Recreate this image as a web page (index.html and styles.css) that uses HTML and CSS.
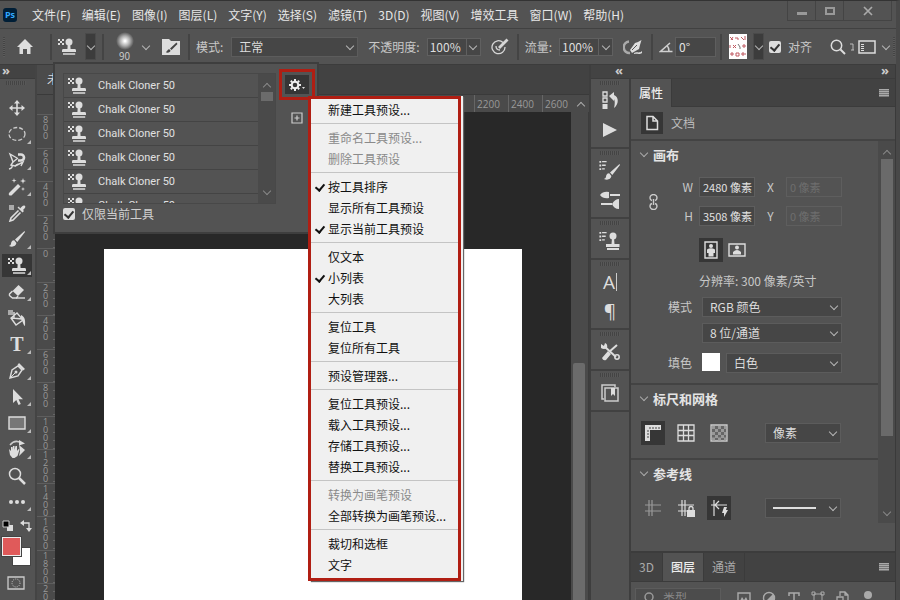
FILE: index.html
```html
<!DOCTYPE html>
<html lang="zh-CN">
<head>
  <meta charset="UTF-8" />
  <title>Photoshop</title>
  <meta name="viewport" content="width=device-width, initial-scale=1.0" />
  <link rel="stylesheet" href="styles.css">
</head>
<body>
  <!-- shared icons -->
  <svg class="sprite" aria-hidden="true">
    <symbol id="stamp" viewBox="0 0 20 18">
      <path d="M1 1h2v2H1zM5 1h2v2H5zM3 3h2v2H3zM1 5h2v2H1zM5 5h2v2H5z"/>
      <circle cx="12" cy="4" r="3.500"/>
      <path d="M10.800 6h2.400l.4 5h4q1.400 0 1.400 1.400V14H5v-1.600Q5 11 6.400 11h4zM6 15.200h12.200v1.600H6z"/>
    </symbol>
    <symbol id="brush" viewBox="0 0 18 18">
      <path d="M16.500 1 7 9.500l2.300 2.400L17 2zM6.200 10.200c-2.500 0-3 2-3.200 3.500-.2 1.200-1 1.800-2 2.200 3 1.600 7 .6 7.400-2.800z"/>
    </symbol>
    <symbol id="lines" viewBox="0 0 8 10">
      <path d="M0 0h2v2H0zM3 0h5v1.500H3zM0 4h2v2H0zM3 4h4v1.500H3zM0 8h2v2H0zM3 8h3v1.500H3z"/>
    </symbol>
  </svg>

  <div class="window">
    <header class="menubar">
      <span class="logo">Ps</span>
      <nav class="menus">
        <a href="#">文件(F)</a>
        <a href="#">编辑(E)</a>
        <a href="#">图像(I)</a>
        <a href="#">图层(L)</a>
        <a href="#">文字(Y)</a>
        <a href="#">选择(S)</a>
        <a href="#">滤镜(T)</a>
        <a href="#">3D(D)</a>
        <a href="#">视图(V)</a>
        <a href="#">增效工具</a>
        <a href="#">窗口(W)</a>
        <a href="#">帮助(H)</a>
      </nav>
      <div class="win-buttons">
        <button aria-label="最小化"><svg width="12" height="12"><path d="M1 7h10v3H1z" fill="#999"/></svg></button>
        <button aria-label="最大化"><svg width="12" height="12"><path d="M2 3h8v6H2z" fill="none" stroke="#999" stroke-width="2"/></svg></button>
        <button class="wide" aria-label="关闭"><svg width="12" height="12"><path d="M2 2l8 8M10 2l-8 8" stroke="#aaa" stroke-width="1.700"/></svg></button>
      </div>
    </header>

    <div class="options">
      <span class="grip-v"></span>
      <button class="icon home" aria-label="主页"><svg width="18" height="18"><path d="M9 1 1 9h2.500v7H7v-5h4v5h3.500V9H17z" /></svg></button>
      <i class="divider"></i>
      <button class="icon" aria-label="当前工具"><svg width="20" height="18"><use href="#stamp"/></svg></button>
      <button class="drop tall" aria-label="工具预设"></button>
      <i class="divider"></i>
      <button class="brush-size" aria-label="画笔大小"><span class="soft-dot"></span>90</button>
      <button class="drop plain" aria-label="画笔选取器"></button>
      <button class="icon" aria-label="画笔设置"><svg width="18" height="18"><path d="M0 1h7l2 2h9v14H0z"/><path d="M14.500 4.500 8 10.500l1.500 1.500 6-6zM7.300 11.300c-2 0-1.800 2-3.500 3 2 .8 4.500.2 4.700-1.700z" fill="#444"/></svg></button>
      <i class="divider"></i>
      <label for="mode">模式:</label>
      <span class="select mode"><select id="mode"><option>正常</option></select></span>
      <label for="opacity">不透明度:</label>
      <span class="combo"><input id="opacity" value="100%"><button class="drop" aria-label="不透明度滑块"></button></span>
      <button class="icon" aria-label="压力控制不透明度"><svg width="18" height="18" fill="none" stroke="#d6d6d6" stroke-width="1.300"><path d="M12 4.500A6.500 6.500 0 1 0 14 9"/><path d="M5 8q0 4 4 4"/><path d="M8 10 16.500 1.500" stroke-width="2.800"/></svg></button>
      <i class="divider"></i>
      <label for="flow">流量:</label>
      <span class="combo"><input id="flow" value="100%"><button class="drop" aria-label="流量滑块"></button></span>
      <button class="icon" aria-label="喷枪"><svg width="20" height="16"><path d="M6 2.500A5.500 5.500 0 1 0 7 14" fill="none" stroke="#aaa" stroke-width="2.500"/><path d="M18.500 1 15 3l-3 1-5 7 2 3 7-4 1-4zM11 14c3-2 5 1 8-2v2c-3 2-5 0-8 1z"/><path d="M9 11l5-5" stroke="#535353"/></svg></button>
      <i class="divider"></i>
      <label for="angle" class="angle" aria-label="角度"><svg width="14" height="12" fill="none" stroke="#d0d0d0" stroke-width="1.500"><path d="M13.500 10.500H1.500L11 2M8 4.500q2 2 2 6"/></svg></label>
      <input id="angle" class="box" value="0°">
      <i class="divider"></i>
      <button class="icon pattern" aria-label="图案"><svg width="18" height="25" fill="none" stroke="#bf5960"><rect width="18" height="25" fill="#fff" stroke="none"/><path d="M1 3l3 3M4 3 2 6M6 4h3v2M12 3l3 3M16 2v4M1 11v3M4 11l3 3M7 11l-3 3M13 12h4M15 10v4"/><path d="M9 10l2 3v2" stroke="#777"/><path d="M1 20h4M3 18v4M7 19h3v3H7zM12 20h5M14 18v4"/></svg></button>
      <button class="drop tall" aria-label="图案选取器"></button>
      <label class="check"><input type="checkbox" checked>对齐</label>
      <span class="spacer"></span>
      <button class="icon" aria-label="搜索"><svg width="16" height="16" fill="none" stroke="#ddd" stroke-width="1.500"><circle cx="6.500" cy="6.500" r="5.200"/><path d="M10.500 10.500 15 15" stroke-width="2"/></svg></button>
      <svg width="4" height="10"><path d="M0 2h3v6M1 8h3" fill="none" stroke="#bbb"/></svg>
      <button class="icon" aria-label="工作区"><svg width="18" height="14"><path d="M1 1h16v12H1z" fill="none" stroke="#ddd" stroke-width="1.500"/><path d="M3 4h3v1H3zM3 6h3v1H3zM3 8h3v1H3zM3 10h3v1H3z"/></svg></button>
      <button class="drop plain last" aria-label="更多"></button>
      <span class="grip-v"></span>
    </div>

    <main class="workspace">
      <aside class="toolbox">
        <div class="strip left">»</div>
        <span class="grip"></span>
        <div class="tools">
          <button class="solo" aria-label="移动"><svg width="18" height="18"><path d="M9 1l3 3.500h-2.200v3.700h3.700V6L17 9l-3.500 3V9.800H9.800v3.700H12L9 17l-3-3.500h2.200V9.800H4.500V12L1 9l3.500-3v2.200h3.700V4.500H6z"/></svg></button>
          <button aria-label="选框"><svg width="18" height="16"><ellipse cx="9" cy="8" rx="8" ry="6.500" fill="none" stroke="#ccc" stroke-width="1.300" stroke-dasharray="4 2"/></svg></button>
          <button aria-label="套索"><svg width="18" height="18" fill="none" stroke="#ddd" stroke-width="1.400"><path d="M9 6 2 2l3 8-2 3 4 1 3-2"/><path d="M4 13q1 3-3 4M5 10l5-4"/><path d="M10 2.500h3a3 3 0 0 1 0 6h-3" stroke-width="2.600"/><path d="M7 14l8-4-2 4"/></svg></button>
          <button aria-label="快速选择"><svg width="18" height="18"><path d="M1 15 10 6l2.500 2.500-9 9Q0 18 1 15z"/><path d="M6 0l.6 2 2 .6-2 .6L6 5l-.6-2-2-.4 2-.6zM15 0l.7 2.300 2.300.7-2.300.7L15 6l-.7-2.300L12 3l2.300-.7zM15 9l.5 1.500 1.500.5-1.500.5L15 13l-.5-1.500L13 11l1.500-.5z"/></svg></button>
          <button class="solo" aria-label="吸管"><svg width="18" height="18"><path d="M1 1h5v5H1z" fill="#aaa"/><path d="M12 4.500c1.500-2 3-3.500 4.500-3s1 2.500-1.500 4.500l1 1-1.500 1.500-5-5L11 2.500z"/><path d="M10.500 6.500 3 14l-1 3 3-1 7.500-7.500" fill="none" stroke="#ddd" stroke-width="1.600"/></svg></button>
          <button aria-label="画笔"><svg width="18" height="18"><use href="#brush"/></svg></button>
          <button class="active" aria-label="仿制图章"><svg width="20" height="18"><use href="#stamp"/></svg></button>
          <button aria-label="橡皮擦"><svg width="18" height="16"><path d="M10.500 1 16 6l-6 6-5.500-5z"/><path d="M4.500 7 1.500 10q-.5 1 .5 2l2.500 2h4L10 12" fill="none" stroke="#ddd" stroke-width="1.400"/><path d="M8 13.300h9v1.400H8z"/></svg></button>
          <button class="solo" aria-label="油漆桶"><svg width="20" height="18"><path d="M1 1h5v5H1z" fill="#aaa"/><path d="M10 4l6 7-7 5-5-7zM7 3v6M5 9l10 1" fill="none" stroke="#ddd" stroke-width="1.400"/><path d="M14 6c4 2 4.500 5 4 11-2-1-2-5-4-7z"/></svg></button>
          <button class="type" aria-label="文字">T</button>
          <button aria-label="钢笔"><svg width="18" height="18"><path d="M2 16 4 8l6-4 4 4-4 6z" fill="none" stroke="#ddd" stroke-width="1.400"/><path d="M2 16l5-5" stroke="#ddd"/><circle cx="8" cy="10" r="1.500"/><path d="M11 1l6 6-2 1.500-5.500-5.500z"/></svg></button>
          <button aria-label="路径选择"><svg width="16" height="18"><path d="M4 1v14l3.300-3 2.200 5 2.300-1-2.200-4.800H14z"/></svg></button>
          <button aria-label="矩形"><svg width="18" height="14"><path d="M1 1h16v12H1z" fill="#777" stroke="#ddd" stroke-width="1.400"/></svg></button>
          <button aria-label="旋转视图"><svg width="20" height="18"><path d="M3 5Q8-1 14 3" fill="none" stroke="#ccc" stroke-width="1.500"/><path d="M12 0l6 3.500-6 2zM2 9l2 2V7h1.500v3L6 6h1.500v4L8.500 6H10v5l1.500-2 1 .8-2 6.200-3 2H5.500L3 15zM12 5l6 5-6 6 1-5z"/></svg></button>
          <button class="solo" aria-label="缩放"><svg width="18" height="18" fill="none" stroke="#ddd" stroke-width="1.500"><circle cx="7" cy="7" r="5.500"/><path d="M11 11l6 6" stroke-width="2.500"/></svg></button>
          <button aria-label="更多工具"><svg width="18" height="6"><circle cx="3" cy="3" r="2"/><circle cx="9" cy="3" r="2"/><circle cx="15" cy="3" r="2"/></svg></button>
        </div>
        <div class="mini">
          <svg width="12" height="12"><path d="M5 5h6v6H5z"/><path d="M1 1h6v6H1z" fill="#000" stroke="#ccc"/></svg>
          <svg width="12" height="12"><path d="M3 3h6v6" fill="none" stroke="#ddd" stroke-width="1.300"/><path d="M0 3l4-3v6zM6 8h6l-3 4z"/></svg>
        </div>
        <div class="colors">
          <button class="bg-color" aria-label="背景色"></button>
          <button class="fg-color" aria-label="前景色"></button>
        </div>
        <button class="icon mask" aria-label="快速蒙版"><svg width="18" height="14" fill="none" stroke="#ccc"><path d="M1 1h16v12H1z" stroke-width="1.300"/><circle cx="9" cy="7" r="4" stroke-dasharray="1 1.200"/></svg></button>
      </aside>

      <section class="document">
        <div class="doc-tabs"><span class="doc-tab">未</span></div>
        <div class="ruler-x">
          <span>2200</span><span>2400</span><span>2600</span>
          <i class="chev up"></i>
        </div>
        <div class="doc-body">
          <div class="ruler-y">
            <span>800</span><span>600</span><span>400</span><span>200</span><span>0</span>
            <span>200</span><span>400</span><span>600</span><span>800</span><span>1000</span>
            <span>1200</span><span>1400</span><span>1600</span><span>1800</span><span>2000</span>
          </div>
          <div class="pasteboard"><div class="paper"></div></div>
          <div class="doc-scroll"><i></i></div>
        </div>
      </section>

      <aside class="right">
        <div class="strip split"><span>«</span><span>»</span></div>
        <div class="right-body">
          <div class="dock">
            <div class="dock-group">
              <span class="grip"></span>
              <button aria-label="历史记录"><svg width="18" height="20"><path d="M2 1h4v4H2zM2 7h4v4H2z" fill="none" stroke="#ddd" stroke-width="1.300"/><path d="M1.500 13h5v5h-5zM8 5l5-4v3c5 2 5 9 0 13 1-4 1-7 0-9v2z"/></svg></button>
              <button aria-label="动作"><svg width="18" height="16"><path d="M2 1l14 7-14 7z"/></svg></button>
            </div>
            <div class="dock-group">
              <span class="grip"></span>
              <button aria-label="画笔设置"><svg width="22" height="20"><use href="#lines" width="8" height="9"/><use href="#brush" x="4" y="2" width="18" height="18"/></svg></button>
              <button aria-label="画笔"><svg width="22" height="18"><path d="M11 3h10v2H11zM1 4q3-4 9-3v6Q4 8 1 4zM2 12h11v2H2zM13 13q3-5 7-5v10q-5 0-7-5z"/></svg></button>
            </div>
            <div class="dock-group">
              <span class="grip"></span>
              <button aria-label="仿制源"><svg width="22" height="20"><use href="#lines" y="1" width="8" height="9"/><circle cx="14" cy="5" r="3.500"/><path d="M13 7h2l.5 6h5v3H7v-3h5.500zM8 17h12v2H8z"/></svg></button>
            </div>
            <div class="dock-group">
              <span class="grip"></span>
              <button class="glyph" aria-label="字符"><span class="caret">A</span></button>
              <button class="glyph" aria-label="段落">¶</button>
            </div>
            <div class="dock-group">
              <span class="grip"></span>
              <button aria-label="工具预设"><svg width="20" height="20"><path d="M4 4 16 15M17 3 9 10" stroke="#ddd" stroke-width="2"/><path d="M8 9l3 3-5 6q-3 1-4-2zM1 2l3 2 1-3q3 1 2 5-3 2-6 0z"/><circle cx="17" cy="15" r="2.200" fill="none" stroke="#ddd" stroke-width="1.500"/></svg></button>
            </div>
            <div class="dock-group">
              <span class="grip"></span>
              <button aria-label="库"><svg width="18" height="18"><path d="M3 15H1V1h13v2M4 4h13v13H4z" fill="none" stroke="#ccc" stroke-width="1.500"/><path d="M10 4h4v8l-2-2-2 2z"/></svg></button>
            </div>
          </div>

          <div class="panels">
            <div class="tabs">
              <button class="tab on">属性</button>
              <button class="burger" aria-label="面板菜单"></button>
            </div>
            <div class="kind">
              <span class="icon-btn active"><svg width="14" height="16"><path d="M2 1.500h6l4.500 4.500v8.500H2zM8 1.500V6h4.500" fill="none" stroke="#ddd" stroke-width="1.500"/></svg></span>
              文档
            </div>
            <div class="props">
              <div class="prop-list">
                <section class="group">
                  <h2><i class="chev"></i>画布</h2>
                  <div class="size-grid">
                    <button class="icon link" aria-label="链接"><svg width="10" height="16" fill="none" stroke="#ccc" stroke-width="1.400"><path d="M3 6.500Q1 6 1 4a3 3 0 0 1 7 0q0 2-2 2.500M3 9.500Q1 10 1 12a3 3 0 0 0 7 0q0-2-2-2.500M4.500 5v6"/></svg></button>
                    <label for="w">W</label><input id="w" class="box" value="2480 像素">
                    <label for="x">X</label><input id="x" class="box" value="0 像素" disabled>
                    <label for="h">H</label><input id="h" class="box" value="3508 像素">
                    <label for="y">Y</label><input id="y" class="box" value="0 像素" disabled>
                  </div>
                  <div class="orient">
                    <button class="icon-btn active" aria-label="纵向"><svg width="14" height="18"><path d="M1 1h12v16H1z" fill="none" stroke="#ddd" stroke-width="1.400"/><circle cx="7" cy="5" r="2"/><path d="M3 8.500Q7 6 11 8.500V12H9.500v3.500h-5V12H3z"/></svg></button>
                    <button class="icon-btn" aria-label="横向"><svg width="18" height="14"><path d="M1 1h16v12H1z" fill="none" stroke="#ddd" stroke-width="1.400"/><circle cx="9" cy="4.500" r="2"/><path d="M5 11.500V9q4-4 8 0v2.500z"/></svg></button>
                  </div>
                  <p class="res">分辨率: 300 像素/英寸</p>
                  <div class="row">
                    <label for="cmode">模式</label>
                    <span class="select"><select id="cmode"><option>RGB 颜色</option></select></span>
                  </div>
                  <div class="row">
                    <label for="depth" aria-label="位深"></label>
                    <span class="select"><select id="depth"><option>8 位/通道</option></select></span>
                  </div>
                  <div class="row fill">
                    <label for="fill">填色</label>
                    <i class="swatch"></i>
                    <span class="select"><select id="fill"><option>白色</option></select></span>
                  </div>
                </section>
                <section class="group">
                  <h2><i class="chev"></i>标尺和网格</h2>
                  <div class="buttons">
                    <button class="icon-btn active" aria-label="标尺"><svg width="18" height="18"><path d="M1 1h16v5H6v11H1z"/><path d="M6 3v2M9 3v2M12 3v2M15 3v2M3 7h2M3 10h2M3 13h2" stroke="#444"/></svg></button>
                    <button class="icon-btn" aria-label="网格"><svg width="18" height="18"><path d="M1 1h16v16H1zM6.500 1v16M11.500 1v16M1 6.500h16M1 11.500h16" fill="none" stroke="#ddd" stroke-width="1.300"/></svg></button>
                    <button class="icon-btn" aria-label="透明网格"><svg width="18" height="18"><path d="M1 1h16v16H1z" fill="#666" stroke="#ccc" stroke-width="1.300"/><path d="M2 3.500h14M2 9.500h14M2 15h14" stroke="#999" stroke-width="3" stroke-dasharray="3 3"/><path d="M5 6.500h11M5 12.500h11" stroke="#999" stroke-width="3" stroke-dasharray="3 3"/></svg></button>
                    <span class="select small"><select aria-label="单位"><option>像素</option></select></span>
                  </div>
                </section>
                <section class="group last">
                  <h2><i class="chev"></i>参考线</h2>
                  <div class="buttons">
                    <button class="icon-btn" aria-label="参考线"><svg width="18" height="18"><path d="M5 1v16M8 1v16M1 6h16M1 12h16" stroke="#999" stroke-width="1.200"/></svg></button>
                    <button class="icon-btn" aria-label="锁定参考线"><svg width="18" height="18"><path d="M5 1v16M8 1v16M1 6h16M1 12h9" stroke="#ddd" stroke-width="1.200"/><path d="M10 11h8v7h-8z"/><path d="M12 11V9.500a2 2 0 0 1 4 0V11" fill="none" stroke="#ddd" stroke-width="1.300"/></svg></button>
                    <button class="icon-btn active" aria-label="智能参考线"><svg width="18" height="18"><path d="M4 1v16M1 6h16M5 6l4 4M5 6l4-4" stroke="#ddd" stroke-width="1.200"/><path d="M14 8h3l-1 3h2l-4 7v-4h-2z"/></svg></button>
                    <span class="select small line"><select aria-label="线型"><option></option></select></span>
                  </div>
                </section>
              </div>
              <div class="prop-scroll"><i class="chev up"></i><b></b><i class="chev"></i></div>
            </div>
            <div class="tabs layers-tabs">
              <button class="tab">3D</button>
              <button class="tab on">图层</button>
              <button class="tab">通道</button>
              <button class="burger" aria-label="面板菜单"></button>
            </div>
            <div class="layers">
              <label class="filter"><svg width="14" height="14"><circle cx="6" cy="6" r="4" fill="none" stroke="#999" stroke-width="1.500"/><path d="M3 9l-2 3" stroke="#999" stroke-width="1.500"/></svg><input placeholder="类型" aria-label="类型"></label>
              <div class="filter-icons">
                <svg width="14" height="14"><path d="M1 2h12v10H1z" fill="none" stroke="#aaa" stroke-width="1.400"/><path d="M3 10l2-4 2 3 2-3 2 4z" fill="#aaa"/></svg>
                <svg width="14" height="14"><circle cx="7" cy="7" r="5.500" fill="none" stroke="#aaa" stroke-width="1.400"/><path d="M11 3A5.500 5.500 0 0 1 3 11z" fill="#aaa"/></svg>
                <svg width="14" height="14"><path d="M2 5V2h10v3M7 2v11M5 13h4" fill="none" stroke="#aaa" stroke-width="1.500"/></svg>
                <svg width="14" height="14"><path d="M3 3h8v8H3zM1 1h3v3H1zM10 1h3v3h-3z" fill="none" stroke="#aaa"/></svg>
                <svg width="14" height="14"><path d="M4 5V1h5l3 3v8H7M9 1v3h3M1 6h6v6H1z" fill="none" stroke="#aaa" stroke-width="1.300"/></svg>
                <svg width="14" height="14"><circle cx="7" cy="4" r="4" fill="#aaa"/></svg>
              </div>
            </div>
          </div>
        </div>
      </aside>
    </main>

    <!-- tool preset picker -->
    <div class="picker">
      <div class="picker-left">
        <div class="presets">
          <ul>
            <li><svg width="20" height="18"><use href="#stamp"/></svg>Chalk Cloner 50</li>
            <li><svg width="20" height="18"><use href="#stamp"/></svg>Chalk Cloner 50</li>
            <li><svg width="20" height="18"><use href="#stamp"/></svg>Chalk Cloner 50</li>
            <li><svg width="20" height="18"><use href="#stamp"/></svg>Chalk Cloner 50</li>
            <li><svg width="20" height="18"><use href="#stamp"/></svg>Chalk Cloner 50</li>
            <li><svg width="20" height="18"><use href="#stamp"/></svg>Chalk Cloner 50</li>
          </ul>
          <div class="preset-scroll"><i class="chev up"></i><b></b><i class="chev"></i></div>
        </div>
        <label class="check"><input type="checkbox" checked>仅限当前工具</label>
      </div>
      <div class="picker-side">
        <button class="gear" aria-label="预设菜单"><svg width="18" height="14"><circle cx="7" cy="7" r="3.300" fill="none" stroke="#eee" stroke-width="2"/><path d="M7 1v2M7 11v2M1 7h2M11 7h2M2.800 2.800l1.400 1.400M9.800 9.800l1.400 1.400M11.200 2.800 9.800 4.200M4.200 9.800l-1.400 1.400" stroke="#eee" stroke-width="2"/><path d="M14 9h3l-1.500 2z"/></svg></button>
        <button class="icon add" aria-label="新建预设"><svg width="12" height="12"><path d="M1 1h10v10H1zM6 3.500v5M3.500 6h5" fill="none" stroke="#ccc" stroke-width="1.200"/></svg></button>
      </div>
    </div>

    <!-- gear menu -->
    <div class="popup">
      <button>新建工具预设...</button>
      <hr>
      <button disabled>重命名工具预设...</button>
      <button disabled>删除工具预设</button>
      <hr>
      <button class="ticked">按工具排序</button>
      <button>显示所有工具预设</button>
      <button class="ticked">显示当前工具预设</button>
      <hr>
      <button>仅文本</button>
      <button class="ticked">小列表</button>
      <button>大列表</button>
      <hr>
      <button>复位工具</button>
      <button>复位所有工具</button>
      <hr>
      <button>预设管理器...</button>
      <hr>
      <button>复位工具预设...</button>
      <button>载入工具预设...</button>
      <button>存储工具预设...</button>
      <button>替换工具预设...</button>
      <hr>
      <button disabled>转换为画笔预设</button>
      <button>全部转换为画笔预设...</button>
      <hr>
      <button>裁切和选框</button>
      <button>文字</button>
    </div>
  </div>
</body>
</html>
```

FILE: styles.css
```css
* { box-sizing: border-box; margin: 0; padding: 0; }

body {
  font-family: "Noto Sans CJK SC", sans-serif;
  font-size: 12px;
  line-height: 20px;
  color: #ddd;
  background: #535353;
  overflow: hidden;
}

button, input, select {
  font: inherit;
  color: inherit;
  background: none;
  border: 0;
  border-radius: 0;
  outline: 0;
}

button {
  display: flex;
  align-items: center;
  justify-content: center;
}

svg { display: block; flex: none; }
svg:not([fill]) { fill: #ddd; }
ul { list-style: none; }
i { font-style: normal; }

.sprite { position: absolute; width: 0; height: 0; }

.window {
  position: relative;
  height: 100vh;
  display: flex;
  flex-direction: column;
  border-top: 1px solid #333;
  border-right: 4px solid #484848;
  overflow: hidden;
}

/* small arrows */
.chev {
  width: 6px;
  height: 6px;
  border: solid #aaa;
  border-width: 0 1px 1px 0;
  transform: rotate(45deg);
}

.chev.up { transform: rotate(225deg); }

/* menu bar */
.menubar {
  display: flex;
  height: 28px;
  flex: none;
  align-items: center;
  padding: 0 4px 0 3px;
  border-bottom: 1px solid #414141;
}

.logo {
  width: 14px;
  height: 14px;
  border-radius: 3px;
  background: #001e36;
  color: #31a8ff;
  font: bold 9px/14px "Open Sans", sans-serif;
  text-align: center;
  margin-right: 15px;
}

.menus { display: flex; gap: 11px; flex: 1; }
.menus a { color: #e6e6e6; text-decoration: none; white-space: nowrap; }

.win-buttons {
  display: flex;
  align-self: flex-start;
  height: 20px;
  border: 1px solid #444;
  border-top: 0;
}

.win-buttons button { width: 28px; border-right: 1px solid #444; }
.win-buttons .wide { width: 47px; border: 0; }

/* options bar */
.options {
  display: flex;
  height: 36px;
  flex: none;
  align-items: center;
  padding: 0 1px 0 3px;
  border-bottom: 1px solid #3c3c3c;
  color: #c8c8c8;
  white-space: nowrap;
}

.divider { width: 2px; height: 26px; background: #444; margin: 0 3px 0 6px; flex: none; }
.divider + label { margin-left: 3px; }
.spacer { flex: 1; }
.options svg { margin: 0 2px; }
.options .angle svg { margin: 0; }
.home { margin: 0 8px 0 9px; }

.grip-v {
  width: 2px;
  height: 20px;
  background: repeating-linear-gradient(#444 0 1px, #5c5c5c 1px 2px);
}

.drop { width: 15px; height: 18px; border: 1px solid #606060; background: #464646; flex: none; }
.drop.tall { width: 11px; height: 27px; background: #3c3c3c; margin-left: 6px; border-color: #4a4a4a; }
.drop.plain { background: none; border: 0; margin-right: 7px; }
.drop.last { margin: 0; }

.drop::after, .select::after {
  content: "";
  width: 5px;
  height: 5px;
  border: solid #b5b5b5;
  border-width: 0 1px 1px 0;
  transform: rotate(45deg);
  margin-top: -2px;
  flex: none;
}

.brush-size {
  flex-direction: column;
  width: 27px;
  margin-left: 4px;
  font-size: 10px;
  line-height: 11px;
}

.soft-dot {
  width: 18px;
  height: 18px;
  border-radius: 50%;
  background: radial-gradient(#fff 5%, #aaa 40%, #535353 70%);
}

.select {
  display: flex;
  align-items: center;
  height: 20px;
  background: #464646;
  border: 1px solid #5c5c5c;
  padding-right: 4px;
}

.select select {
  appearance: none;
  flex: 1;
  min-width: 0;
  height: 18px;
  line-height: 18px;
  padding-left: 7px;
  color: #ddd;
}

.mode { width: 127px; margin: 0 10px 0 8px; }

.combo { display: flex; margin: 0 8px 0 7px; }

.combo input {
  width: 39px;
  height: 18px;
  background: #464646;
  border: 1px solid #606060;
  border-right: 0;
  padding-left: 2px;
  color: #ddd;
}

.box {
  width: 100%;
  height: 20px;
  background: #464646;
  border: 1px solid #5e5e5e;
  padding-left: 3px;
  font-size: 11px;
  color: #e2e2e2;
}

#angle { width: 41px; margin: 0 -2px 0 2px; font-size: 12px; }
.pattern { margin-left: 2px; }
.pattern + .drop { margin: 0 5px 0 4px; }

.check { display: flex; align-items: center; gap: 7px; }

.check input {
  appearance: none;
  width: 12px;
  height: 12px;
  border-radius: 2px;
  background: #ddd;
  display: flex;
  justify-content: center;
}

.check input:checked::after {
  content: "";
  width: 4px;
  height: 7px;
  margin-top: 1px;
  border: solid #333;
  border-width: 0 2px 2px 0;
  transform: rotate(40deg);
}

/* workspace */
.workspace { flex: 1; display: flex; min-height: 0; }

.strip {
  height: 14px;
  flex: none;
  background: #434343;
  border-bottom: 1px solid #3c3c3c;
  font: bold 13px/11px "Open Sans", sans-serif;
  color: #ccc;
}

.strip.left { padding-left: 2px; }
.strip.split { display: flex; justify-content: space-between; padding: 0 6px 0 24px; }

.grip {
  width: 20px;
  height: 4px;
  flex: none;
  background: repeating-linear-gradient(90deg, #444 0 1px, #585858 1px 2px);
}

.toolbox {
  width: 37px;
  flex: none;
  border-right: 2px solid #444;
}

.toolbox .grip { display: block; margin: 2px 0 0 6px; }

.tools {
  display: grid;
  grid-auto-rows: 1fr;
  height: 420px;
  margin-top: 10px;
  padding-left: 2px;
}

.tools button { position: relative; width: 30px; height: 23px; align-self: center; }
.tools .active { background: #363636; }

.tools button:not(.solo)::after {
  content: "";
  position: absolute;
  right: 1px;
  bottom: 2px;
  border: 2px solid;
  border-color: transparent #bbb #bbb transparent;
}

.tools .type { font: bold 20px/20px "Liberation Serif", serif; }

.mini { display: flex; gap: 6px; padding: 5px 2px; }

.colors { position: relative; height: 28px; margin-left: 2px; }
.colors button { position: absolute; width: 19px; height: 19px; }
.bg-color { left: 10px; top: 10px; background: #fff; border: 1px solid #444; }
.fg-color { left: 0; top: 0; background: #e05a5a; border: 1px solid #eee; outline: 1px solid #444; }
.mask { margin: 11px 0 0 7px; }

/* document */
.document { flex: 1; min-width: 0; display: flex; flex-direction: column; background: #4a4a4a; }

.doc-tabs { height: 30px; flex: none; background: #424242; border-bottom: 1px solid #3a3a3a; }

.doc-tab {
  display: block;
  width: 110px;
  height: 29px;
  padding: 4px 10px;
  background: #4b4b4b;
}

.ruler-x {
  display: flex;
  height: 17px;
  flex: none;
  justify-content: flex-end;
  align-items: center;
  padding-right: 5px;
  font: 10px/16px "Open Sans", sans-serif;
  color: #999;
}

.ruler-x span { width: 34px; height: 17px; border-left: 1px solid #666; padding: 1px 0 0 2px; }
.ruler-x .chev { margin: 4px 0 0 2px; }

.doc-body { flex: 1; display: flex; min-height: 0; }

.ruler-y {
  width: 18px;
  height: 505px;
  flex: none;
  display: grid;
  grid-auto-rows: 1fr;
  padding-top: 2px;
  font: 9px/8px "Open Sans", sans-serif;
  color: #999;
}

.ruler-y span {
  border-top: 1px solid #5e5e5e;
  padding: 1px 6px 0 6px;
  width: 18px;
  height: 33px;
  word-break: break-all;
  background: repeating-linear-gradient(transparent 0 7px, #666 7px 8px) right / 2px 100% no-repeat;
}

.pasteboard { flex: 1; background: #282828; padding: 137px 49px 0 49px; }
.paper { height: 100%; background: #fff; }
.doc-scroll { width: 18px; padding: 251px 3px 0 2px; border-right: 1px solid #3c3c3c; }
.doc-scroll i { display: block; height: 100%; background: #6b6b6b; border-radius: 2px 2px 0 0; }

/* right side */
.right { width: 307px; flex: none; display: flex; flex-direction: column; border-right: 1px solid #3a3a3a; border-left: 2px solid #3e3e3e; }
.right-body { flex: 1; display: flex; min-height: 0; }

.dock { width: 40px; flex: none; border-right: 2px solid #3e3e3e; }

.dock-group {
  display: flex;
  flex-direction: column;
  align-items: center;
  padding: 2px 0 3px;
  border-bottom: 2px solid #414141;
}

.dock-group .grip { margin-bottom: 1px; }
.dock-group button { height: 29px; width: 30px; }
.dock-group .glyph { font: 19px/24px "Open Sans", sans-serif; }
.caret { line-height: 18px; padding-right: 1px; border-right: 1px solid #ccc; }

.panels { flex: 1; min-width: 0; display: flex; flex-direction: column; }

.tabs {
  display: flex;
  height: 28px;
  flex: none;
  background: #424242;
  border-bottom: 1px solid #3b3b3b;
}

.tab { padding: 0 8px; color: #aaa; border-right: 1px solid #3b3b3b; }
.tab.on { background: #535353; color: #eee; font-weight: 500; height: 28px; }

.burger {
  width: 10px;
  height: 8px;
  margin: auto 6px auto auto;
  background: repeating-linear-gradient(#aaa 0 1px, #777 1px 2px);
}

.kind {
  display: flex;
  align-items: center;
  gap: 8px;
  height: 34px;
  flex: none;
  padding-left: 10px;
  color: #bbb;
  border-bottom: 2px solid #434343;
}

.icon-btn { width: 24px; height: 24px; flex: none; display: flex; align-items: center; justify-content: center; }
.icon-btn.active { background: #363636; }
.kind .icon-btn { width: 22px; height: 22px; }

.props { display: flex; height: 382px; flex: none; }
.prop-list { flex: 1; min-width: 0; }

.prop-scroll {
  width: 17px;
  display: flex;
  flex-direction: column;
  align-items: center;
  background: #4a4a4a;
  padding: 10px 0 8px;
}

.prop-scroll b { width: 12px; height: 277px; margin: 2px 0 auto; background: #6a6a6a; }
.prop-scroll .chev, .preset-scroll .chev { border-color: #888; }

.group { padding: 0 10px 10px; border-bottom: 2px solid #434343; }
.group.last { border: 0; padding-bottom: 0; }

h2 {
  display: flex;
  align-items: center;
  gap: 6px;
  height: 27px;
  font-size: 13px;
  color: #e4e4e4;
}

h2 .chev { margin-top: -3px; }

.size-grid {
  display: grid;
  grid-template-columns: 26px 20px 56px 19px 56px;
  gap: 9px 6px;
  padding-top: 9px;
}

.size-grid label { text-align: center; color: #c8c8c8; }
.size-grid label:nth-of-type(odd) { text-align: right; }
.link { grid-row: span 2; }
.box:disabled { background: none; color: #6e6e6e; }

.orient { display: flex; gap: 2px; margin: 12px 0 9px 58px; }
.res { margin-left: 58px; color: #c8c8c8; }
.row { display: flex; gap: 10px; width: 201px; margin-top: 6px; color: #c8c8c8; }
.row label { width: 51px; text-align: right; }
.row .select { flex: 1; }
.row.fill { margin-top: 10px; }
.fill .select { margin-left: -4px; }
.swatch { width: 18px; height: 18px; background: #fff; }

.buttons { display: flex; align-items: center; gap: 9px; height: 30px; margin-top: 6px; }
.small { width: 76px; margin-left: 25px; }
.line::before { content: ""; order: 1; width: 44px; height: 2px; background: #ddd; margin-right: 14px; }
.line::after { order: 2; }

.layers-tabs { margin-top: 28px; border-top: 2px solid #3c3c3c; height: 31px; }
.layers { display: flex; padding: 6px 20px 0 4px; }

.filter {
  display: flex;
  align-items: center;
  width: 86px;
  height: 20px;
  padding-left: 7px;
  gap: 6px;
  border: 1px solid #5c5c5c;
  background: #4c4c4c;
}

.filter input { width: 50px; }
.filter input::placeholder { color: #888; }
.filter-icons { flex: 1; display: flex; justify-content: space-between; padding: 3px 0 0 16px; }

/* tool preset picker */
.picker {
  position: absolute;
  left: 53px;
  top: 61px;
  width: 266px;
  height: 172px;
  display: flex;
  background: #535353;
  border: 2px solid #3e3e3e;
  padding: 9px 2px 0 8px;
}

.picker-left { width: 213px; }

.presets { display: flex; height: 131px; border: 1px solid #484848; overflow: hidden; }
.presets ul { flex: 1; }

.presets li {
  display: flex;
  align-items: center;
  gap: 11px;
  height: 24px;
  padding-left: 3px;
  border-bottom: 1px solid #444;
  font: 11px/22px Roboto, sans-serif;
  color: #e0e0e0;
}

.preset-scroll {
  width: 17px;
  display: flex;
  flex-direction: column;
  align-items: center;
  background: #4a4a4a;
  padding: 10px 0 9px;
}

.preset-scroll b { width: 12px; height: 9px; margin: 2px 0 auto; background: #6b6b6b; }

.picker .check { color: #d0d0d0; }

.picker-side { flex: 1; display: flex; flex-direction: column; align-items: center; padding-left: 3px; }

.gear {
  width: 36px;
  height: 31px;
  margin-top: -4px;
  border: 3px solid #b01e13;
  background: #363636;
  box-shadow: inset 0 0 0 3px #535353;
}

.add { margin-top: 12px; }

/* gear menu */
.popup {
  position: absolute;
  left: 308px;
  top: 95px;
  width: 153px;
  padding-bottom: 3px;
  background: #f0f0f0;
  border: 3px solid #b01e13;
  box-shadow: 2px 0 0 #f0f0f0, 3px 1px 1px #666;
  color: #111;
}

.popup button {
  position: relative;
  height: 21px;
  padding-left: 17px;
  white-space: nowrap;
}

.popup button:disabled { color: #8a8a8a; }
.popup hr { border: 0; border-top: 1px solid #c4c4c4; margin: 3px 0; }

.popup .ticked::before {
  content: "";
  position: absolute;
  left: 6px;
  top: 6px;
  width: 4px;
  height: 7px;
  border: solid #111;
  border-width: 0 2px 2px 0;
  transform: rotate(40deg);
}
```
